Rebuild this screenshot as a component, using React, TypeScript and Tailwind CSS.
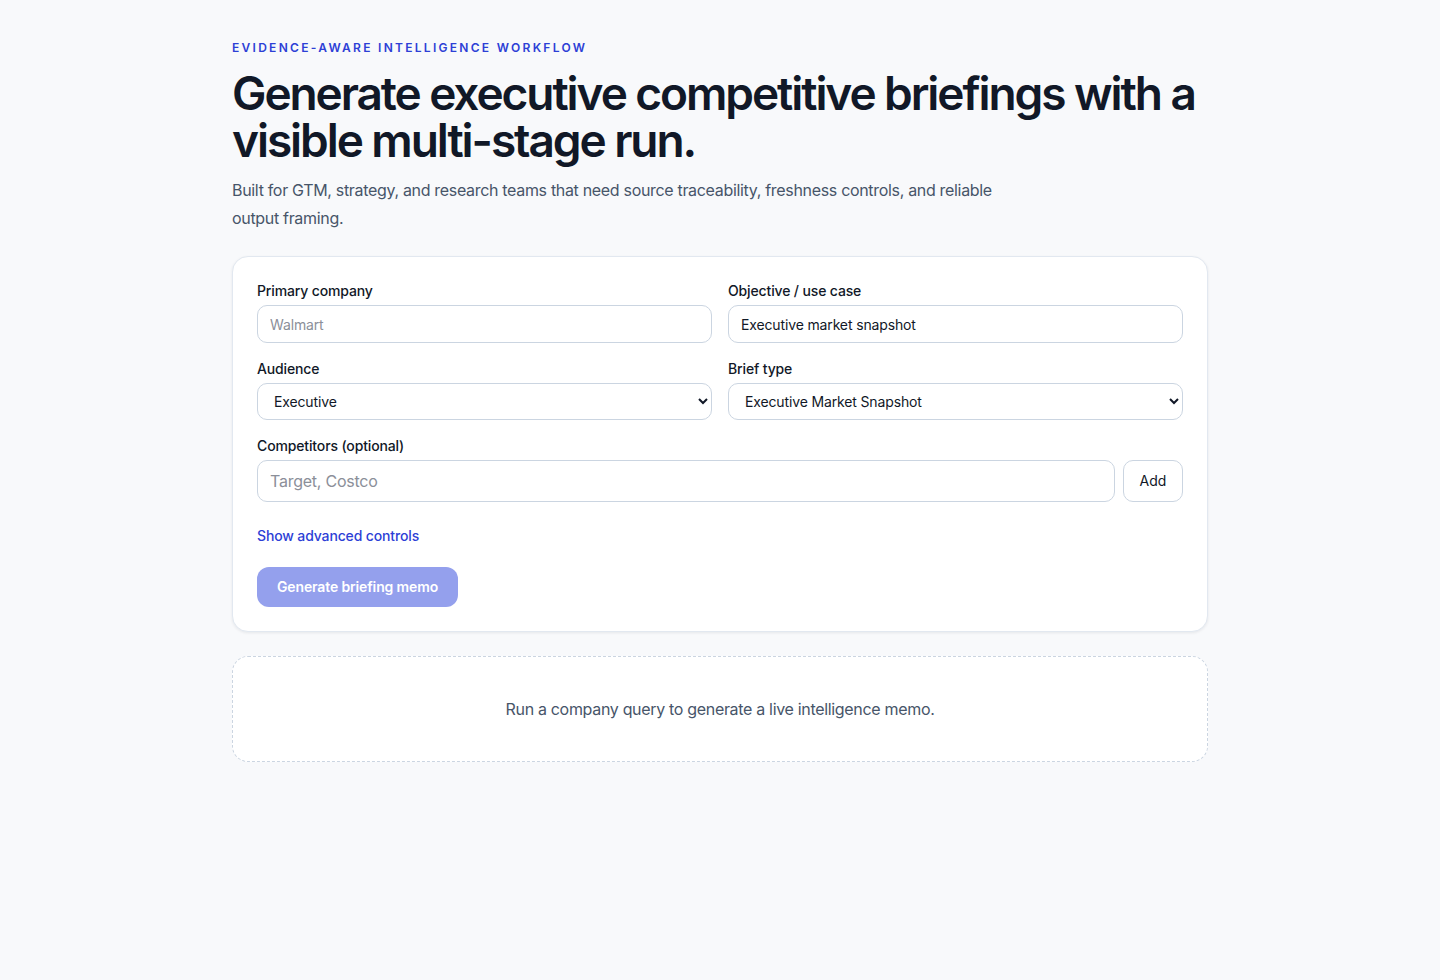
import { useState } from "react";

export default function App() {
  const [company, setCompany] = useState("");
  const [objective, setObjective] = useState("Executive market snapshot");
  const [audience, setAudience] = useState("Executive");
  const [briefType, setBriefType] = useState("Executive Market Snapshot");
  const [competitor, setCompetitor] = useState("");

  const field =
    "h-[38px] w-full rounded-[10px] border border-[#cbd5e1] bg-white px-3 text-sm tracking-[-0.01em] text-[#111827] outline-none placeholder:text-[#8b8f99]";

  return (
    <div
      className="min-h-screen bg-[#f8f9fb]"
      style={{ fontFamily: "Inter, 'Noto Sans', sans-serif" }}
    >
      <main className="mx-auto max-w-5xl px-6 pt-10 pb-16">
        {/* Header */}
        <p className="text-xs font-semibold uppercase tracking-[0.19em] text-[#2d3fd6]">
          Evidence-aware intelligence workflow
        </p>
        <h1 className="mt-[14px] text-[46px] font-semibold leading-[47px] tracking-[-0.045em] text-[#111827]">
          Generate executive competitive briefings with a visible multi-stage run.
        </h1>
        <p className="mt-3 max-w-3xl text-base leading-7 tracking-[-0.02em] text-[#475569]">
          Built for GTM, strategy, and research teams that need source traceability, freshness
          controls, and reliable output framing.
        </p>

        {/* Form card */}
        <section className="mt-6 rounded-2xl border border-[#e2e8f0] bg-white p-6 shadow-[0_1px_3px_rgba(15,23,42,0.08)]">
          <div className="grid grid-cols-2 gap-x-4 gap-y-4">
            <label className="flex flex-col gap-1">
              <span className="text-sm font-medium tracking-[-0.01em] text-[#111827]">Primary company</span>
              <input
                className={field}
                placeholder="Walmart"
                value={company}
                onChange={(e) => setCompany(e.target.value)}
              />
            </label>
            <label className="flex flex-col gap-1">
              <span className="text-sm font-medium tracking-[-0.01em] text-[#111827]">Objective / use case</span>
              <input
                className={field}
                value={objective}
                onChange={(e) => setObjective(e.target.value)}
              />
            </label>
            <label className="flex flex-col gap-1">
              <span className="text-sm font-medium tracking-[-0.01em] text-[#111827]">Audience</span>
              <select
                className="h-[37px] w-full rounded-[10px] border border-[#cbd5e1] bg-white px-3 text-sm tracking-[-0.01em] text-[#111827] outline-none"
                value={audience}
                onChange={(e) => setAudience(e.target.value)}
              >
                <option>Executive</option>
                <option>Strategy</option>
                <option>GTM</option>
              </select>
            </label>
            <label className="flex flex-col gap-1">
              <span className="text-sm font-medium tracking-[-0.01em] text-[#111827]">Brief type</span>
              <select
                className="h-[37px] w-full rounded-[10px] border border-[#cbd5e1] bg-white px-3 text-sm tracking-[-0.01em] text-[#111827] outline-none"
                value={briefType}
                onChange={(e) => setBriefType(e.target.value)}
              >
                <option>Executive Market Snapshot</option>
                <option>Competitive Deep Dive</option>
              </select>
            </label>
          </div>

          <div className="mt-4 flex flex-col gap-1">
            <span className="text-sm font-medium tracking-[-0.01em] text-[#111827]">Competitors (optional)</span>
            <div className="flex gap-2">
              <input
                className="h-[42px] flex-1 rounded-[10px] border border-[#cbd5e1] bg-white px-3 text-base tracking-[-0.015em] text-[#111827] outline-none placeholder:text-[#8b8f99]"
                placeholder="Target, Costco"
                value={competitor}
                onChange={(e) => setCompetitor(e.target.value)}
              />
              <button
                type="button"
                className="h-[42px] w-[60px] rounded-[10px] border border-[#cbd5e1] bg-white text-sm text-[#111827]"
              >
                Add
              </button>
            </div>
          </div>

          <button
            type="button"
            className="mt-6 block text-sm font-medium tracking-[-0.01em] text-[#2d3fd6]"
          >
            Show advanced controls
          </button>

          <button
            type="button"
            disabled
            className="mt-[21px] h-10 rounded-xl bg-[#94a0ed] px-5 text-sm font-semibold tracking-[-0.01em] text-white"
          >
            Generate briefing memo
          </button>
        </section>

        {/* Empty state */}
        <section className="mt-6 rounded-2xl border border-dashed border-[#cbd5e1] bg-white py-10 text-center text-base leading-6 tracking-[-0.02em] text-[#475569]">
          Run a company query to generate a live intelligence memo.
        </section>
      </main>
    </div>
  );
}
